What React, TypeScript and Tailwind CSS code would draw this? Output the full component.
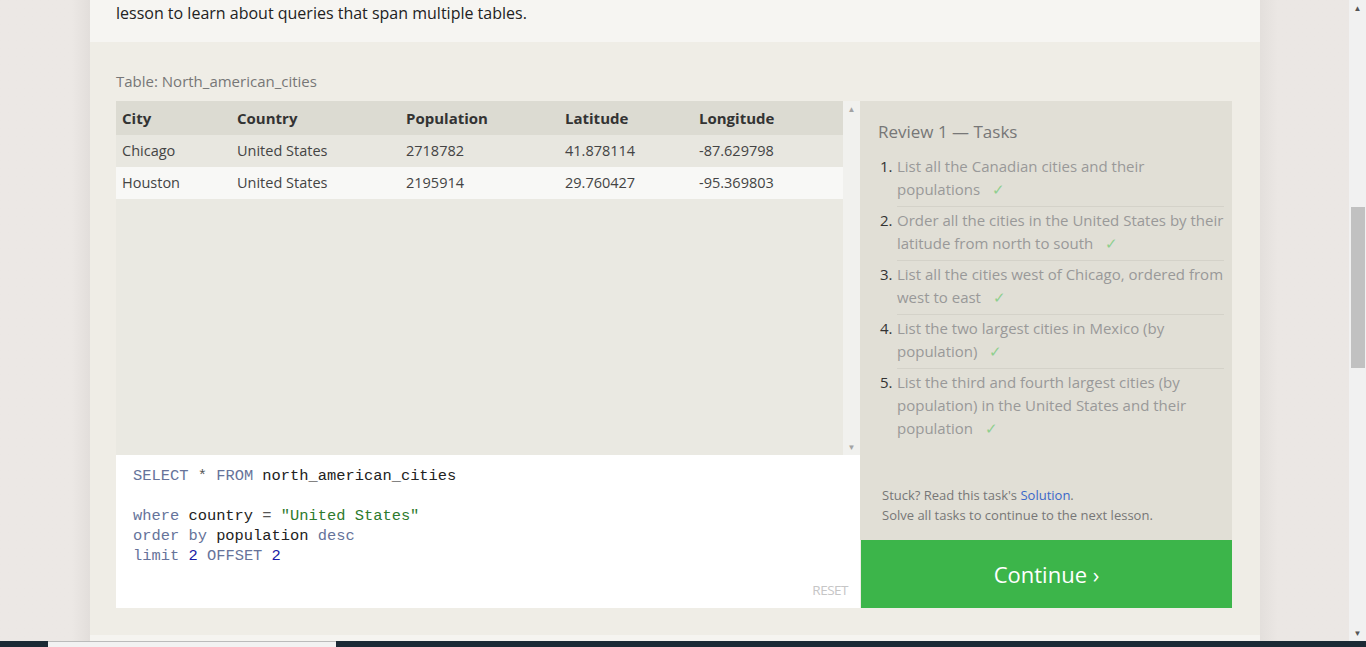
const font = { fontFamily: '"Open Sans", "Liberation Sans", sans-serif' };

const rows = [
  { city: 'Chicago', country: 'United States', population: '2718782', lat: '41.878114', lng: '-87.629798' },
  { city: 'Houston', country: 'United States', population: '2195914', lat: '29.760427', lng: '-95.369803' },
];

const tasks = [
  ['List all the Canadian cities and their', 'populations'],
  ['Order all the cities in the United States by their', 'latitude from north to south'],
  ['List all the cities west of Chicago, ordered from', 'west to east'],
  ['List the two largest cities in Mexico (by', 'population)'],
  ['List the third and fourth largest cities (by', 'population) in the United States and their', 'population'],
];

function Check() {
  return <span className="ml-[12px] text-[#8fcf8f]">✓</span>;
}

function App() {
  return (
    <div className="w-[1366px] h-[647px] overflow-hidden flex flex-col bg-[#ece8e5]" style={font}>
      <div className="flex-1 flex min-h-0">
        <div className="w-[90px] bg-gradient-to-r from-[#ece8e5] from-80% to-[#e2dedb]" />

        <div className="w-[1170px] flex flex-col">
          <div className="h-[42px] bg-[#f6f5f2] pl-[26px] text-[16px] text-[#222] leading-[26px]">
            lesson to learn about queries that span multiple tables.
          </div>

          <div className="flex-1 bg-[#efede6] px-[26px] pt-[28px]">
            <div className="text-[15px] text-[#777] leading-[22px] h-[31px]">Table: North_american_cities</div>

            <div className="flex">
              <div className="w-[744px] flex flex-col">
                <div className="h-[354px] flex bg-[#eae9e2]">
                  <div className="flex-1">
                    <div className="flex h-[34px] items-center bg-[#dcdbd2] text-[15px] font-bold text-[#333]">
                      <div className="w-[115px] pl-[6px]">City</div>
                      <div className="w-[169px] pl-[6px]">Country</div>
                      <div className="w-[159px] pl-[6px]">Population</div>
                      <div className="w-[134px] pl-[6px]">Latitude</div>
                      <div className="flex-1 pl-[6px]">Longitude</div>
                    </div>
                    {rows.map((r, i) => (
                      <div
                        key={r.city}
                        className={`flex h-[32px] items-center text-[14.5px] text-[#444] ${i === 0 ? 'bg-[#e8e7e0]' : 'bg-[#f8f8f6]'}`}
                      >
                        <div className="w-[115px] pl-[6px]">{r.city}</div>
                        <div className="w-[169px] pl-[6px]">{r.country}</div>
                        <div className="w-[159px] pl-[6px]">{r.population}</div>
                        <div className="w-[134px] pl-[6px]">{r.lat}</div>
                        <div className="flex-1 pl-[6px]">{r.lng}</div>
                      </div>
                    ))}
                  </div>
                  <div className="w-[17px] bg-[#f1f1ee] flex flex-col items-center justify-between py-[4px] text-[#a3a3a3] text-[8px] leading-none">
                    <span>▲</span>
                    <span>▼</span>
                  </div>
                </div>

                <div
                  className="h-[153px] bg-white pl-[17px] pt-[11px] text-[15.4px] leading-[20px] text-[#222] relative"
                  style={{ fontFamily: '"Liberation Mono", "DejaVu Sans Mono", monospace' }}
                >
                  <div>
                    <span className="text-[#66739a]">SELECT</span> <span className="text-[#555]">*</span>{' '}
                    <span className="text-[#66739a]">FROM</span> north_american_cities
                  </div>
                  <div>&nbsp;</div>
                  <div>
                    <span className="text-[#66739a]">where</span> country <span className="text-[#555]">=</span>{' '}
                    <span className="text-[#2d7a2d]">"United States"</span>
                  </div>
                  <div>
                    <span className="text-[#66739a]">order by</span> population{' '}
                    <span className="text-[#66739a]">desc</span>
                  </div>
                  <div>
                    <span className="text-[#66739a]">limit</span> <span className="text-[#1a1aa6]">2</span>{' '}
                    <span className="text-[#66739a]">OFFSET</span> <span className="text-[#1a1aa6]">2</span>
                  </div>
                  <div
                    className="absolute right-[12px] bottom-[10px] text-[13.5px] leading-[16px] text-[#c6c6c6] tracking-[-0.5px]"
                    style={font}
                  >
                    RESET
                  </div>
                </div>
              </div>

              <div className="w-[372px] flex flex-col">
                <div className="h-[439px] bg-[#e1dfd6] pl-[18px] pr-[8px] pt-[19px] flex flex-col">
                  <div className="text-[17px] text-[#777] leading-[24px]">Review 1 — Tasks</div>
                  <div className="mt-[9px] text-[15px] leading-[23px]">
                    {tasks.map((t, i) => (
                      <div key={i} className="flex">
                        <div className="w-[19px] pl-[2px] pt-[2px] text-[#333]">{i + 1}.</div>
                        <div
                          className={`flex-1 text-[#999] pb-[5px] pt-[2px] ${i < tasks.length - 1 ? 'border-b border-[#d4d2c9]' : ''}`}
                        >
                          {t.map((line, j) => (
                            <div key={j} className="whitespace-nowrap">
                              {line}
                              {j === t.length - 1 && <Check />}
                            </div>
                          ))}
                        </div>
                      </div>
                    ))}
                  </div>
                  <div className="mt-auto pb-[15px] pl-[4px] text-[13px] leading-[20px] text-[#777]">
                    <div>
                      Stuck? Read this task's <span className="text-[#3a67c9]">Solution</span>.
                    </div>
                    <div>Solve all tasks to continue to the next lesson.</div>
                  </div>
                </div>
                <div className="h-[68px] bg-[#3cb54a] ml-[1px] flex items-center justify-center text-white text-[22px]">
                  Continue ›
                </div>
              </div>
            </div>
          </div>

          <div className="h-[6px] bg-[#f5f4f0]" />
        </div>

        <div className="flex-1 bg-gradient-to-r from-[#e3dfdc] to-[#ebe7e4] to-20%" />

        <div className="w-[17px] bg-[#f1f1f1] flex flex-col items-center text-[8px] leading-none text-[#555]">
          <span className="mt-[4px]">▲</span>
          <div className="mt-[195px] h-[161px] w-[14px] bg-[#c1c1c1]" />
          <span className="mt-auto mb-[4px]">▼</span>
        </div>
      </div>

      <div className="h-[6px] bg-[#1b2a35] flex">
        <div className="ml-[48px] w-[288px] bg-[#f2f2f2] border-t border-[#bbb]" />
      </div>
    </div>
  );
}

export default App;
